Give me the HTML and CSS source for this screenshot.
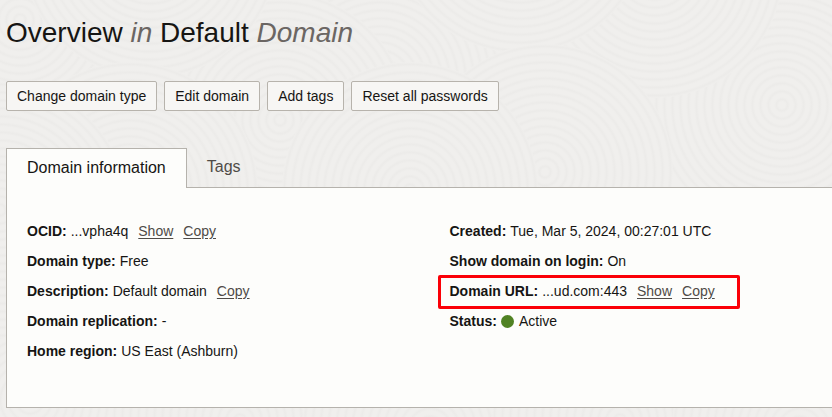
FILE: index.html
```html
<!DOCTYPE html>
<html lang="en">
<head>
    <meta charset="UTF-8">
    <meta name="viewport" content="width=device-width, initial-scale=1.0">
    <title>Default Domain</title>
    <link rel="stylesheet" href="styles.css">
</head>
<body>
    <!-- Ring texture behind the page -->
    <svg class="texture" aria-hidden="true">
        <defs>
            <radialGradient id="ring" gradientUnits="userSpaceOnUse" cx="0" cy="0" r="8" spreadMethod="repeat">
                <stop offset="0" stop-color="#f0efed"/>
                <stop offset="0.4" stop-color="#f0efed"/>
                <stop offset="0.7" stop-color="#ecebe9"/>
                <stop offset="1" stop-color="#f0efed"/>
            </radialGradient>
            <circle id="disc" r="128" fill="url(#ring)"/>
            <pattern id="rings" width="832" height="417" patternUnits="userSpaceOnUse">
                <rect width="832" height="417" fill="#f0efed"/>
                <use href="#disc" x="30" y="400"/>
                <use href="#disc" x="240" y="420"/>
                <use href="#disc" x="430" y="430"/>
                <use href="#disc" x="620" y="420"/>
                <use href="#disc" x="800" y="430"/>
                <use href="#disc" x="380" y="80"/>
                <use href="#disc" x="830" y="-20"/>
                <use href="#disc" x="20" y="20"/>
                <use href="#disc" x="782" y="105"/>
                <use href="#disc" x="280" y="120"/>
                <use href="#disc" x="150" y="-50"/>
                <use href="#disc" x="655" y="-30"/>
                <use href="#disc" x="520" y="-75"/>
                <use href="#disc" x="545" y="172"/>
                <use href="#disc" x="410" y="190"/>
                <use href="#disc" x="130" y="190"/>
                <use href="#disc" x="0" y="210"/>
            </pattern>
        </defs>
        <rect width="100%" height="100%" fill="url(#rings)"/>
    </svg>

    <main class="page">
        <h1>Overview <em>in</em> Default <em>Domain</em></h1>

        <div class="actions">
            <button type="button">Change domain type</button>
            <button type="button">Edit domain</button>
            <button type="button">Add tags</button>
            <button type="button">Reset all passwords</button>
        </div>

        <div class="tabs" role="tablist">
            <button type="button" class="tab active" role="tab" id="tab-info" aria-selected="true" aria-controls="panel-info">Domain information</button>
            <button type="button" class="tab" role="tab" aria-selected="false">Tags</button>
        </div>

        <section class="panel" role="tabpanel" id="panel-info" aria-labelledby="tab-info">
            <dl class="details">
                <div class="row">
                    <dt>OCID:</dt>
                    <dd>...vpha4q</dd>
                    <dd class="links"><a href="#">Show</a><a href="#">Copy</a></dd>
                </div>
                <div class="row">
                    <dt>Domain type:</dt>
                    <dd>Free</dd>
                </div>
                <div class="row">
                    <dt>Description:</dt>
                    <dd>Default domain</dd>
                    <dd class="links"><a href="#">Copy</a></dd>
                </div>
                <div class="row">
                    <dt>Domain replication:</dt>
                    <dd>-</dd>
                </div>
                <div class="row">
                    <dt>Home region:</dt>
                    <dd>US East (Ashburn)</dd>
                </div>
            </dl>
            <dl class="details">
                <div class="row">
                    <dt>Created:</dt>
                    <dd>Tue, Mar 5, 2024, 00:27:01 UTC</dd>
                </div>
                <div class="row">
                    <dt>Show domain on login:</dt>
                    <dd>On</dd>
                </div>
                <div class="row highlight">
                    <dt>Domain URL:</dt>
                    <dd>...ud.com:443</dd>
                    <dd class="links"><a href="#">Show</a><a href="#">Copy</a></dd>
                </div>
                <div class="row">
                    <dt>Status:</dt>
                    <dd class="status">Active</dd>
                </div>
            </dl>
        </section>
    </main>
</body>
</html>
```
FILE: styles.css
```css
body {
    font-family: "Liberation Sans", Arial, sans-serif;
    font-size: 14px;
    color: #161513;
    background-color: #f0efed;
    margin: 0;
}

.texture {
    position: absolute;
    top: 0;
    left: 0;
    width: 100%;
    height: 100%;
    z-index: -1;
}

.page {
    padding: 17px 0 9px 6px;
}

h1 {
    margin: 0 0 32px;
    font-size: 28px;
    font-weight: normal;
    line-height: 32px;
}

h1 em {
    color: #6b6663;
}

button {
    font-family: inherit;
    color: inherit;
    cursor: pointer;
}

.actions {
    display: flex;
    flex-wrap: wrap;
    gap: 7px;
    margin-bottom: 37px;
}

.actions button {
    height: 30px;
    padding: 0 10px;
    font-size: 14px;
    background-color: #f7f6f4;
    border: 1px solid #b7b3ac;
    border-radius: 2px;
}

.actions button:hover {
    background-color: #ffffff;
}

.tabs {
    display: flex;
}

.tab {
    height: 39px;
    padding: 0 20px 2px;
    font-size: 16px;
    color: #4f4b47;
    background: none;
    border: 0;
}

/* the active tab covers the panel's top border */
.tab.active {
    position: relative;
    height: 40px;
    margin-bottom: -1px;
    color: #161513;
    background-color: #fdfdfb;
    border: 1px solid #b5b2ac;
    border-bottom: 0;
}

.panel {
    display: grid;
    grid-template-columns: 1fr 1fr;
    column-gap: 40px;
    padding: 28px 0 41px 20px;
    background-color: #fdfdfb;
    border: 1px solid #b5b2ac;
    border-right: 0;
}

.details {
    margin: 0;
}

.row {
    display: flex;
    width: fit-content;
    gap: 4px;
    line-height: 30px;
    white-space: nowrap;
}

dt {
    font-weight: bold;
}

dd {
    margin: 0;
}

.links {
    display: flex;
    gap: 10px;
    margin-left: 6px;
}

.links a {
    color: #4f4b47;
    text-underline-offset: 2px;
}

.highlight {
    position: relative;
}

.highlight::after {
    content: "";
    position: absolute;
    inset: -1px -25px -3px -12px;
    border: 3px solid #fb0007;
    border-radius: 2px;
    pointer-events: none;
}

.status {
    display: flex;
    align-items: center;
    gap: 5px;
}

.status::before {
    content: "";
    width: 13px;
    height: 13px;
    border-radius: 50%;
    background-color: #508223;
}
```
